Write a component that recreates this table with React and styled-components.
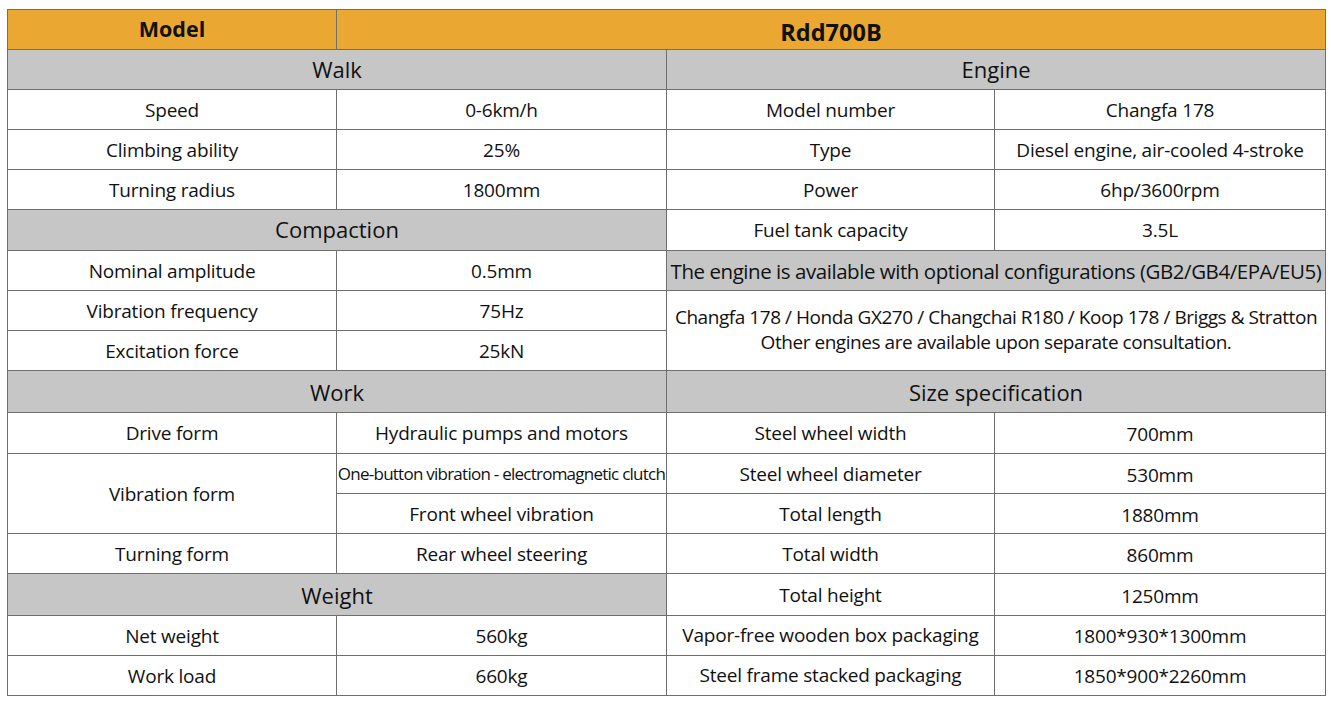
import React from 'react';
import styled, { createGlobalStyle, css } from 'styled-components';

const GlobalStyle = createGlobalStyle`
  html, body {
    margin: 0;
    padding: 0;
    background: #ffffff;
  }
  body {
    font-family: "Open Sans", "Noto Sans", "Liberation Sans", sans-serif;
    color: #111111;
  }
`;

const Page = styled.div`
  padding: 9px 0 0 7px;
`;

const SpecGrid = styled.div`
  display: inline-grid;
  grid-template-columns: 328px 329px 327px 330px;
  grid-template-rows: 39px 39px 39px 39px 39px 40px 39px 39px 39px 41px 40px 39px 39px 39px 41px 39px 39px;
  gap: 1px;
  padding: 1px;
  background: #6f6f6f;
`;

const variants = {
  head: css`
    background: #eaa832;
    font-weight: 700;
    font-size: 21.5px;
  `,
  title: css`
    background: #eaa832;
    font-weight: 700;
    font-size: 23.5px;
  `,
  section: css`
    background: #c6c6c6;
    font-size: 22px;
  `,
  note: css`
    background: #c6c6c6;
    font-size: 20.5px;
    letter-spacing: -0.45px;
    white-space: nowrap;
  `,
  cell: css`
    background: #ffffff;
    font-size: 19px;
    letter-spacing: -0.2px;
  `,
  tight: css`
    background: #ffffff;
    font-size: 17px;
    letter-spacing: -0.75px;
    white-space: nowrap;
  `,
  multi: css`
    background: #ffffff;
    font-size: 19px;
    letter-spacing: -0.45px;
    line-height: 25px;
  `,
};

const Cell = styled.div`
  display: flex;
  align-items: center;
  justify-content: center;
  text-align: center;
  overflow: hidden;
  grid-column: span ${(p) => p.$cols || 1};
  grid-row: span ${(p) => p.$rows || 1};
  ${(p) => variants[p.$kind || 'cell']}
  padding-top: ${(p) => Math.max(p.$shift || 0, 0)}px;
  padding-bottom: ${(p) => Math.max(-(p.$shift || 0), 0)}px;
`;

const rows = [
  [{ t: 'Model', kind: 'head', shift: -3 }, { t: 'Rdd700B', kind: 'title', cols: 3, shift: 5 }],
  [{ t: 'Walk', kind: 'section', cols: 2, shift: -1 }, { t: 'Engine', kind: 'section', cols: 2, shift: -1 }],
  [{ t: 'Speed' }, { t: '0-6km/h' }, { t: 'Model number' }, { t: 'Changfa 178' }],
  [{ t: 'Climbing ability' }, { t: '25%' }, { t: 'Type' }, { t: 'Diesel engine, air-cooled 4-stroke' }],
  [{ t: 'Turning radius' }, { t: '1800mm' }, { t: 'Power' }, { t: '6hp/3600rpm' }],
  [{ t: 'Compaction', kind: 'section', cols: 2, shift: -2 }, { t: 'Fuel tank capacity' }, { t: '3.5L' }],
  [
    { t: 'Nominal amplitude' },
    { t: '0.5mm' },
    { t: 'The engine is available with optional configurations (GB2/GB4/EPA/EU5)', kind: 'note', cols: 2 },
  ],
  [
    { t: 'Vibration frequency' },
    { t: '75Hz' },
    {
      t: (
        <>
          Changfa 178 / Honda GX270 / Changchai R180 / Koop 178 / Briggs &amp; Stratton
          <br />
          Other engines are available upon separate consultation.
        </>
      ),
      kind: 'multi',
      cols: 2,
      rows: 2,
      shift: -2,
    },
  ],
  [{ t: 'Excitation force' }, { t: '25kN' }],
  [{ t: 'Work', kind: 'section', cols: 2 }, { t: 'Size specification', kind: 'section', cols: 2 }],
  [{ t: 'Drive form' }, { t: 'Hydraulic pumps and motors' }, { t: 'Steel wheel width' }, { t: '700mm', shift: 2 }],
  [
    { t: 'Vibration form', rows: 2 },
    { t: 'One-button vibration - electromagnetic clutch', kind: 'tight' },
    { t: 'Steel wheel diameter' },
    { t: '530mm', shift: 2 },
  ],
  [{ t: 'Front wheel vibration' }, { t: 'Total length' }, { t: '1880mm', shift: 2 }],
  [{ t: 'Turning form' }, { t: 'Rear wheel steering' }, { t: 'Total width' }, { t: '860mm', shift: 2 }],
  [{ t: 'Weight', kind: 'section', cols: 2 }, { t: 'Total height' }, { t: '1250mm', shift: 2 }],
  [{ t: 'Net weight' }, { t: '560kg' }, { t: 'Vapor-free wooden box packaging', shift: -2 }, { t: '1800*930*1300mm' }],
  [{ t: 'Work load' }, { t: '660kg' }, { t: 'Steel frame stacked packaging', shift: -2 }, { t: '1850*900*2260mm' }],
];

export default function App() {
  return (
    <>
      <GlobalStyle />
      <Page>
        <SpecGrid>
          {rows.flatMap((row, r) =>
            row.map((c, i) => (
              <Cell
                key={`${r}-${i}`}
                $kind={c.kind}
                $cols={c.cols}
                $rows={c.rows}
                $shift={c.shift}
              >
                {c.t}
              </Cell>
            )),
          )}
        </SpecGrid>
      </Page>
    </>
  );
}
